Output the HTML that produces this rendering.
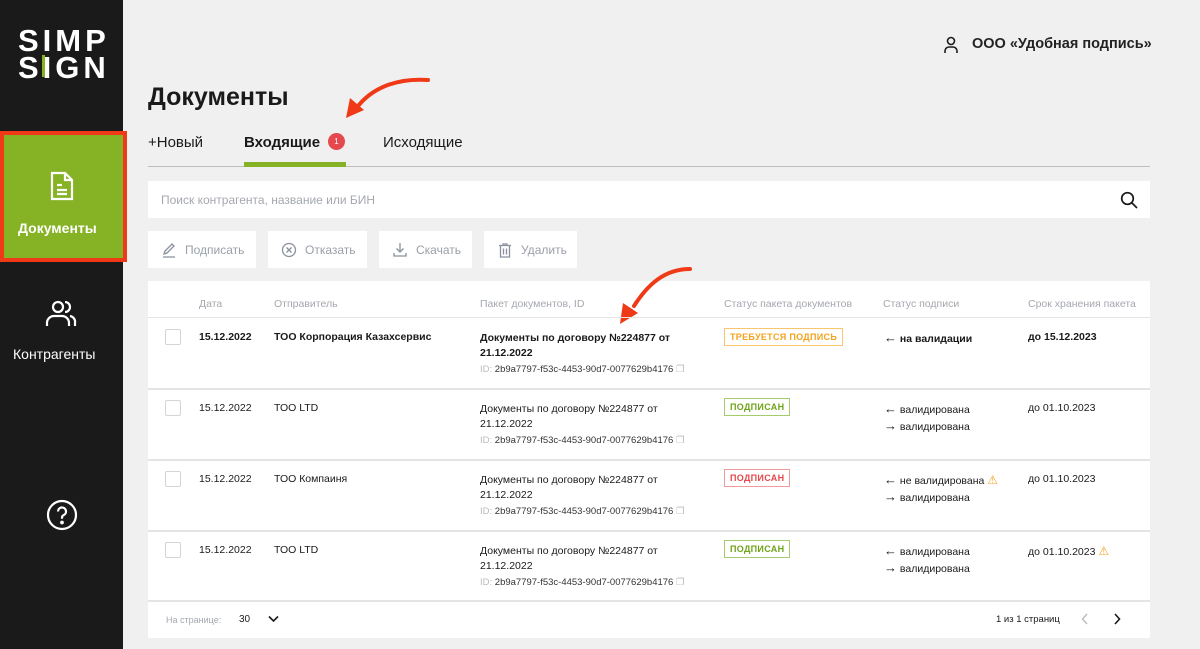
<!DOCTYPE html>
<html><head><meta charset="utf-8"><style>
*{margin:0;padding:0;box-sizing:border-box}
body{width:1200px;height:649px;overflow:hidden;background:#f0f0f0;font-family:"Liberation Sans",sans-serif;color:#1a1a1a;position:relative}
.a{position:absolute;white-space:nowrap}
.side{left:0;top:0;width:123px;height:649px;background:#1a1a1a}
.logo{color:#fff;font-weight:bold;font-size:31px;letter-spacing:4px;line-height:27px;left:18px;top:27px}
.hl{left:0;top:131px;width:127px;height:131px;background:#86b325;border:4px solid #f03a17}
.btn{background:#fff;height:37px;top:231px;color:#9aa0a8;font-size:12px;display:flex;align-items:center;padding-left:13px;gap:8px}
.card{left:148px;top:281px;width:1002px;height:357px;background:#fff}
.th{top:298px;font-size:10.5px;color:#a4a8ae}
.line{left:148px;width:1002px;height:2px;background:#e4e4e4}
.cb{width:16px;height:16px;border:1px solid #d4d4d4;border-radius:2px;background:#fff}
.t{font-size:10.5px}
.b{font-weight:bold}
.id{font-size:9.5px;color:#333}
.id span{color:#bbb}
.ar{font-size:13px}
.tag{font-size:9px;font-weight:bold;padding:3px 5px;border:1px solid;letter-spacing:.3px}
</style></head><body>
<div class="a side"></div>
<div class="a logo">SIMP<br>SIGN</div>
<div class="a" style="left:42px;top:55px;width:3px;height:22px;background:#86b325"></div>
<div class="a hl"></div>
<svg class="a" style="left:49px;top:171px" width="26" height="30" viewBox="0 0 26 30" fill="none" stroke="#fff" stroke-width="2.2"><path d="M3 2h13l7 7v19H3z"/><path d="M16 2v7h7M8 14h5M8 19h10M8 23h10"/></svg>
<div class="a b" style="left:18px;top:220px;color:#fff;font-size:14px">Документы</div>
<svg class="a" style="left:45px;top:299px" width="32" height="30" viewBox="0 0 32 30" fill="none" stroke="#fff" stroke-width="2.2"><circle cx="13" cy="8" r="5"/><path d="M2 27v-3a7 7 0 0 1 7-7h8a7 7 0 0 1 7 7v3M20 3a5 5 0 0 1 0 10M25 17a6 6 0 0 1 5 7v3"/></svg>
<div class="a" style="left:13px;top:346px;color:#fff;font-size:14px">Контрагенты</div>
<svg class="a" style="left:46px;top:499px" width="32" height="32" viewBox="0 0 32 32" fill="none" stroke="#fff" stroke-width="2.2"><circle cx="16" cy="16" r="14"/><path d="M12 12.5a4 4 0 1 1 5.5 3.7c-1 .5-1.5 1.3-1.5 2.5v1"/><circle cx="16" cy="23.5" r=".8" fill="#fff"/></svg>

<svg class="a" style="left:943px;top:36px" width="16" height="18" viewBox="0 0 16 18" fill="none" stroke="#1a1a1a" stroke-width="1.6"><circle cx="8" cy="5" r="3.5"/><path d="M2 17v-2a4 4 0 0 1 4-4h4a4 4 0 0 1 4 4v2"/></svg>
<div class="a" style="left:972px;top:36px;font-size:14.5px;font-weight:bold;color:#222">ООО «Удобная подпись»</div>

<div class="a b" style="left:148px;top:83px;font-size:25px">Документы</div>
<svg class="a" style="left:340px;top:72px" width="92" height="50" viewBox="0 0 92 50"><path d="M88 8C60 6 34 14 18 34" fill="none" stroke="#f03a17" stroke-width="4" stroke-linecap="round"/><path d="M6 46l4-20 14 12z" fill="#f03a17"/></svg>

<div class="a" style="left:148px;top:134px;font-size:15px">+Новый</div>
<div class="a b" style="left:244px;top:134px;font-size:15px">Входящие</div>
<div class="a" style="left:328px;top:133px;width:17px;height:17px;border-radius:50%;background:#e5484d;color:#fff;font-size:8px;text-align:center;line-height:17px">1</div>
<div class="a" style="left:383px;top:134px;font-size:15px">Исходящие</div>
<div class="a" style="left:148px;top:166px;width:1002px;height:1px;background:#bdbdbd"></div>
<div class="a" style="left:244px;top:162px;width:102px;height:5px;background:#86b325"></div>

<div class="a" style="left:148px;top:181px;width:1002px;height:37px;background:#fff"></div>
<div class="a" style="left:161px;top:193px;font-size:12px;color:#a4a8ae">Поиск контрагента, название или БИН</div>
<svg class="a" style="left:1120px;top:191px" width="18" height="18" viewBox="0 0 18 18" fill="none" stroke="#1a1a1a" stroke-width="1.7"><circle cx="7.5" cy="7.5" r="5.8"/><path d="M12 12l5 5"/></svg>

<div class="a btn" style="left:148px;width:108px"><svg width="16" height="16" viewBox="0 0 16 16" fill="none" stroke="#8a90a0" stroke-width="1.3"><path d="M3 12l1-3 7-7 2 2-7 7-3 1zM2 15h12"/></svg>Подписать</div>
<div class="a btn" style="left:268px;width:99px"><svg width="16" height="16" viewBox="0 0 16 16" fill="none" stroke="#8a90a0" stroke-width="1.3"><circle cx="8" cy="8" r="6.5"/><path d="M5.5 5.5l5 5M10.5 5.5l-5 5"/></svg>Отказать</div>
<div class="a btn" style="left:379px;width:93px"><svg width="16" height="16" viewBox="0 0 16 16" fill="none" stroke="#8a90a0" stroke-width="1.3"><path d="M8 1v9M4.5 6.5L8 10l3.5-3.5M2 11v3h12v-3"/></svg>Скачать</div>
<div class="a btn" style="left:484px;width:93px"><svg width="16" height="16" viewBox="0 0 16 16" fill="none" stroke="#8a90a0" stroke-width="1.3"><path d="M2 3.5h12M6 3.5V2h4v1.5M3.5 3.5V15h9V3.5M6.5 6.5v6M9.5 6.5v6"/></svg>Удалить</div>

<div class="a card"></div>
<svg class="a" style="left:610px;top:264px" width="85" height="64" viewBox="0 0 85 64"><path d="M80 5C55 5 38 20 24 42" fill="none" stroke="#f03a17" stroke-width="4" stroke-linecap="round"/><path d="M10 60l3-21 15 10z" fill="#f03a17"/></svg>
<div class="a th" style="left:199px">Дата</div>
<div class="a th" style="left:274px">Отправитель</div>
<div class="a th" style="left:480px">Пакет документов, ID</div>
<div class="a th" style="left:724px">Статус пакета документов</div>
<div class="a th" style="left:883px">Статус подписи</div>
<div class="a th" style="left:1028px">Срок хранения пакета</div>
<div class="a line" style="top:317px;height:1px"></div>
<div class="a line" style="top:388px"></div>
<div class="a line" style="top:459px"></div>
<div class="a line" style="top:530px"></div>
<div class="a line" style="top:600px"></div>

<!-- row 1 -->
<div class="a cb" style="left:165px;top:329px"></div>
<div class="a t b" style="left:199px;top:331px">15.12.2022</div>
<div class="a t b" style="left:274px;top:331px">ТОО Корпорация Казахсервис</div>
<div class="a t b" style="left:480px;top:331px;line-height:15px">Документы по договору №224877 от<br>21.12.2022</div>
<div class="a id" style="left:480px;top:364px"><span>ID:</span> 2b9a7797-f53c-4453-90d7-0077629b4176 <span>❐</span></div>
<div class="a tag" style="left:724px;top:328px;color:#f5a21c;border-color:#f9c66e">ТРЕБУЕТСЯ ПОДПИСЬ</div>
<div class="a t b" style="left:884px;top:330px"><span class="ar">←</span> на валидации</div>
<div class="a t b" style="left:1028px;top:331px">до 15.12.2023</div>
<!-- row 2 -->
<div class="a cb" style="left:165px;top:400px"></div>
<div class="a t" style="left:199px;top:402px">15.12.2022</div>
<div class="a t" style="left:274px;top:402px">ТОО LTD</div>
<div class="a t" style="left:480px;top:402px;line-height:15px">Документы по договору №224877 от<br>21.12.2022</div>
<div class="a id" style="left:480px;top:435px"><span>ID:</span> 2b9a7797-f53c-4453-90d7-0077629b4176 <span>❐</span></div>
<div class="a tag" style="left:724px;top:398px;color:#6fa318;border-color:#a5cc6a">ПОДПИСАН</div>
<div class="a t" style="left:884px;top:401px;line-height:15px"><span class="ar">←</span> валидирована<br><span class="ar">→</span> валидирована</div>
<div class="a t" style="left:1028px;top:402px">до 01.10.2023</div>
<!-- row 3 -->
<div class="a cb" style="left:165px;top:471px"></div>
<div class="a t" style="left:199px;top:473px">15.12.2022</div>
<div class="a t" style="left:274px;top:473px">ТОО Компаиня</div>
<div class="a t" style="left:480px;top:473px;line-height:15px">Документы по договору №224877 от<br>21.12.2022</div>
<div class="a id" style="left:480px;top:506px"><span>ID:</span> 2b9a7797-f53c-4453-90d7-0077629b4176 <span>❐</span></div>
<div class="a tag" style="left:724px;top:469px;color:#e5484d;border-color:#f09a9c">ПОДПИСАН</div>
<div class="a t" style="left:884px;top:472px;line-height:15px"><span class="ar">←</span> не валидирована <span style="color:#f5a21c;font-size:12px">⚠</span><br><span class="ar">→</span> валидирована</div>
<div class="a t" style="left:1028px;top:473px">до 01.10.2023</div>
<!-- row 4 -->
<div class="a cb" style="left:165px;top:542px"></div>
<div class="a t" style="left:199px;top:544px">15.12.2022</div>
<div class="a t" style="left:274px;top:544px">ТОО LTD</div>
<div class="a t" style="left:480px;top:544px;line-height:15px">Документы по договору №224877 от<br>21.12.2022</div>
<div class="a id" style="left:480px;top:577px"><span>ID:</span> 2b9a7797-f53c-4453-90d7-0077629b4176 <span>❐</span></div>
<div class="a tag" style="left:724px;top:540px;color:#6fa318;border-color:#a5cc6a">ПОДПИСАН</div>
<div class="a t" style="left:884px;top:543px;line-height:15px"><span class="ar">←</span> валидирована<br><span class="ar">→</span> валидирована</div>
<div class="a t" style="left:1028px;top:544px">до 01.10.2023 <span style="color:#f5a21c;font-size:12px">⚠</span></div>

<div class="a" style="left:166px;top:615px;font-size:9px;color:#a4a8ae">На странице:</div>
<div class="a" style="left:239px;top:614px;font-size:10px">30</div>
<svg class="a" style="left:268px;top:615px" width="11" height="8" viewBox="0 0 11 8" fill="none" stroke="#1a1a1a" stroke-width="1.6"><path d="M1 1.5l4.5 4.5 4.5-4.5"/></svg>
<div class="a" style="left:996px;top:614px;font-size:9.5px">1 из 1 страниц</div>
<svg class="a" style="left:1081px;top:613px" width="8" height="12" viewBox="0 0 8 12" fill="none" stroke="#bbb" stroke-width="1.4"><path d="M6 1L1.5 6 6 11"/></svg>
<svg class="a" style="left:1113px;top:613px" width="8" height="12" viewBox="0 0 8 12" fill="none" stroke="#1a1a1a" stroke-width="1.6"><path d="M2 1l4.5 5L2 11"/></svg>
</body></html>
